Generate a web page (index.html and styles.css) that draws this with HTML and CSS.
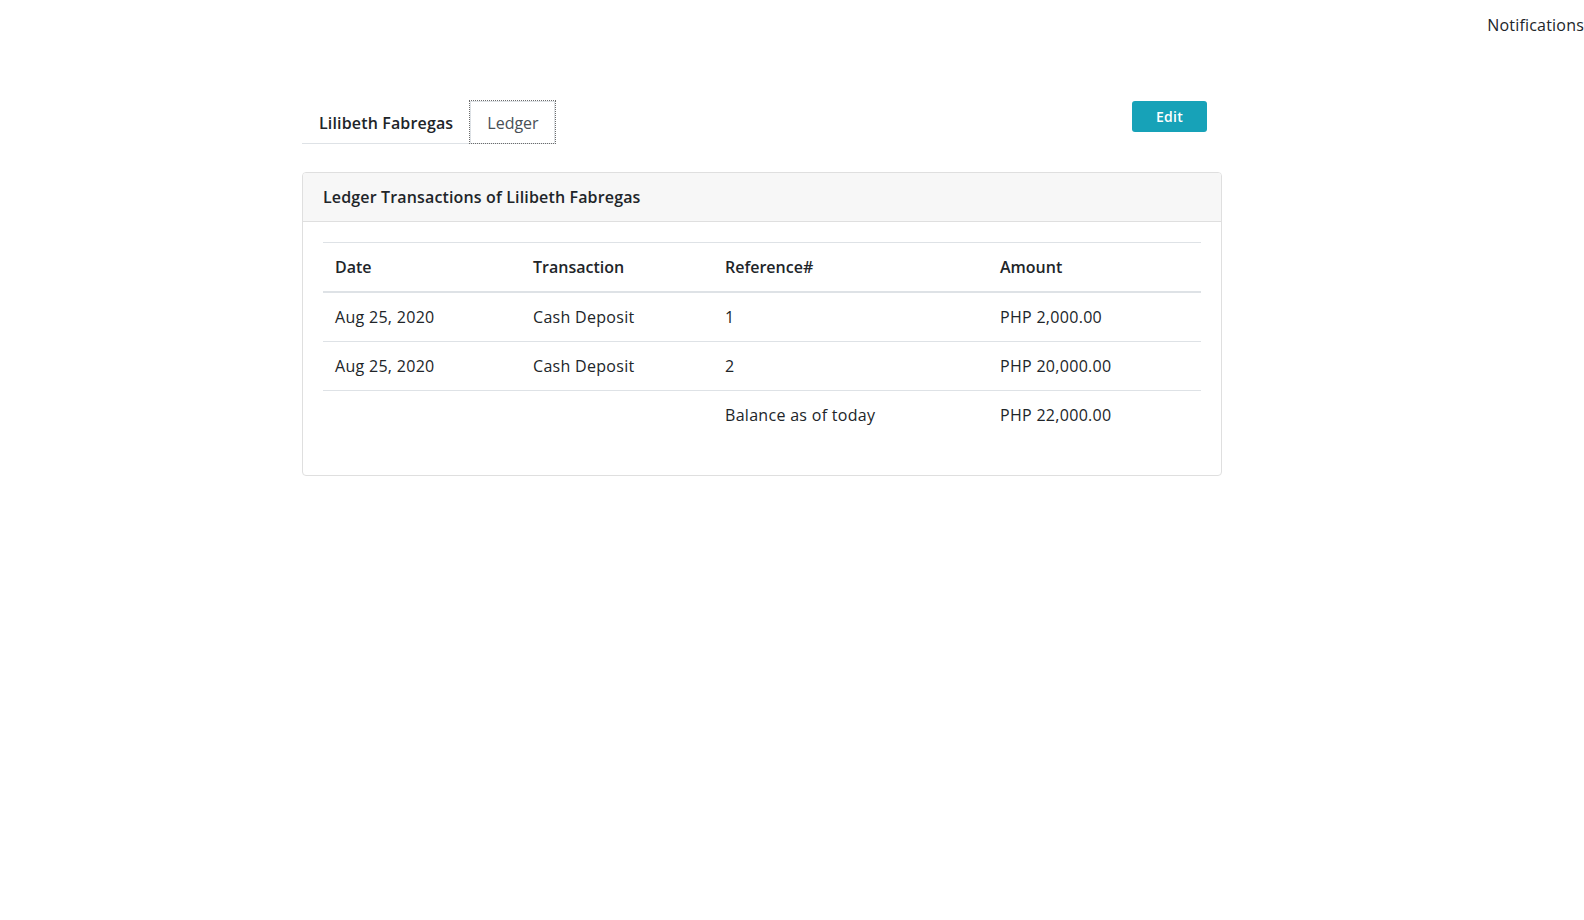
FILE: index.html
```html
<!DOCTYPE html>
<html lang="en">
<head>
<meta charset="utf-8">
<title>Ledger</title>
<link rel="stylesheet" href="styles.css">
</head>
<body>
<header class="topbar">
  <span class="notif">Notifications</span>
</header>
<main class="page">
  <div class="head-row">
    <ul class="tabs">
      <li class="tab tab-name">Lilibeth Fabregas</li>
      <li class="tab tab-active">Ledger</li>
    </ul>
    <button class="btn-edit" type="button">Edit</button>
  </div>
  <section class="card">
    <div class="card-header">Ledger Transactions of Lilibeth Fabregas</div>
    <div class="card-body">
      <table class="ledger">
        <colgroup>
          <col class="c1"><col class="c2"><col class="c3"><col class="c4">
        </colgroup>
        <thead>
          <tr><th>Date</th><th>Transaction</th><th>Reference#</th><th>Amount</th></tr>
        </thead>
        <tbody>
          <tr><td>Aug 25, 2020</td><td>Cash Deposit</td><td>1</td><td>PHP 2,000.00</td></tr>
          <tr><td>Aug 25, 2020</td><td>Cash Deposit</td><td>2</td><td>PHP 20,000.00</td></tr>
          <tr><td></td><td></td><td>Balance as of today</td><td>PHP 22,000.00</td></tr>
        </tbody>
      </table>
    </div>
  </section>
</main>
</body>
</html>
```

FILE: styles.css
```css
* { box-sizing: border-box; }

body {
  margin: 0;
  font-family: "Open Sans", "Liberation Sans", sans-serif;
  font-size: 16px;
  line-height: 24px;
  color: #212529;
  background: #fff;
  letter-spacing: 0.3px;
}

.topbar {
  display: flex;
  justify-content: flex-end;
  padding-top: 13px;
  height: 101px;
}

.notif {
  font-size: 16px;
  color: #212529;
  letter-spacing: 0.2px;
  margin-right: 0;
}

.page {
  padding-left: 302px;
  width: 1222px;
}

.head-row {
  display: flex;
  justify-content: space-between;
  align-items: flex-start;
}

.tabs {
  list-style: none;
  margin: 0;
  padding: 0;
  display: flex;
  border-bottom: 1px solid #dee2e6;
}

.tab {
  padding: 9px 16px 8px 16px;
  border: 1px solid transparent;
  border-bottom: none;
  line-height: 24px;
}

.tab-name {
  font-weight: 600;
  color: #212529;
  letter-spacing: 0.15px;
}

.tab-active {
  color: #495057;
  outline: 1px dotted #6c6c6c;
  outline-offset: 0;
  border-color: #dee2e6;
  letter-spacing: 0;
  padding-left: 16px;
  padding-right: 15px;
}

.btn-edit {
  margin-right: 15px;
  width: 75px;
  height: 31px;
  border: none;
  border-radius: 3px;
  background: #17a2b8;
  color: #fff;
  font-family: inherit;
  font-size: 14px;
  font-weight: 600;
  letter-spacing: 0.2px;
  padding: 0;
}

.card {
  margin-top: 28px;
  border: 1px solid #dfdfdf;
  border-radius: 4px;
  overflow: hidden;
}

.card-header {
  background: #f7f7f7;
  border-bottom: 1px solid #dfdfdf;
  padding: 12px 20px;
  font-weight: 600;
  letter-spacing: 0.15px;
}

.card-body {
  padding: 20px;
}

.ledger {
  width: 100%;
  border-collapse: collapse;
  margin-bottom: 16px;
}

.c1 { width: 198px; }
.c2 { width: 192px; }
.c3 { width: 275px; }
.c4 { width: auto; }

.ledger th,
.ledger td {
  text-align: left;
  padding: 12px;
  border-top: 1px solid #dee2e6;
  line-height: 24px;
  vertical-align: top;
}

.ledger th {
  font-weight: 600;
  letter-spacing: 0;
  border-bottom: 2px solid #dee2e6;
}

.ledger td {
  font-weight: 400;
}
```
